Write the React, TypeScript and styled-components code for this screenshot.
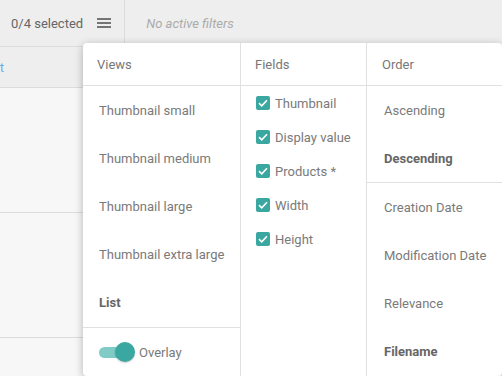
import styled, { createGlobalStyle } from 'styled-components';

const GlobalStyle = createGlobalStyle`
  html, body {
    margin: 0;
    padding: 0;
    background: #f7f7f7;
    font-family: Roboto, "Liberation Sans", Arial, sans-serif;
  }
  * {
    box-sizing: border-box;
  }
`;

const views = [
  { label: 'Thumbnail small' },
  { label: 'Thumbnail medium' },
  { label: 'Thumbnail large' },
  { label: 'Thumbnail extra large' },
  { label: 'List', active: true },
];

const fields = ['Thumbnail', 'Display value', 'Products *', 'Width', 'Height'];

const App = () => {
  return (
    <Page>
      <GlobalStyle />
      <TopBar>
        <Selected>0/4 selected</Selected>
        <MenuButton aria-label="menu">
          <svg width="14" height="10" viewBox="0 0 14 10">
            <rect x="0" y="0" width="14" height="2" fill="#757575" />
            <rect x="0" y="4" width="14" height="2" fill="#757575" />
            <rect x="0" y="8" width="14" height="2" fill="#757575" />
          </svg>
        </MenuButton>
        <Filters>No active filters</Filters>
      </TopBar>
      <SubBar>
        <ClipLink>
          <Link>Select</Link>
        </ClipLink>
      </SubBar>
      <TableRow />
      <TableRow />

      <Panel>
        <Column>
          <ColumnHead>Views</ColumnHead>
          <List>
            {views.map((v) => (
              <Item key={v.label} $active={v.active}>
                {v.label}
              </Item>
            ))}
          </List>
          <Footer>
            <Switch>
              <Track />
              <Thumb />
            </Switch>
            <SwitchLabel>Overlay</SwitchLabel>
          </Footer>
        </Column>
        <Column>
          <ColumnHead>Fields</ColumnHead>
          <List>
            {fields.map((f) => (
              <CheckRow key={f}>
                <Box>
                  <svg width="10" height="8" viewBox="0 0 10 8">
                    <path d="M1 4.2 L3.7 6.8 L9 1.2" stroke="#fff" strokeWidth="1.6" fill="none" />
                  </svg>
                </Box>
                {f}
              </CheckRow>
            ))}
          </List>
        </Column>
        <Column $inset={17}>
          <ColumnHead>Order</ColumnHead>
          <Group>
            <Item>Ascending</Item>
            <Item $active>Descending</Item>
          </Group>
          <List>
            <Item>Creation Date</Item>
            <Item>Modification Date</Item>
            <Item>Relevance</Item>
            <Item $active>Filename</Item>
          </List>
        </Column>
      </Panel>
    </Page>
  );
};

const Page = styled.div`
  position: relative;
  width: 502px;
  height: 376px;
  overflow: hidden;
  background: #f7f7f7;
`;

const TopBar = styled.div`
  display: flex;
  align-items: center;
  height: 47px;
  background: #eeeeee;
  border-bottom: 1px solid #dcdcdc;
`;

const Selected = styled.span`
  padding-left: 11px;
  font-size: 13px;
  color: #666;
`;

const MenuButton = styled.div`
  display: flex;
  align-items: center;
  height: 46px;
  padding: 0 13px 0 14px;
  border-right: 1px solid #dcdcdc;
`;

const Filters = styled.span`
  padding-left: 21px;
  font-size: 13px;
  font-style: italic;
  color: #ababab;
`;

const SubBar = styled.div`
  display: flex;
  align-items: center;
  height: 41px;
  background: #eeeeee;
  border-bottom: 1px solid #dcdcdc;
`;

const ClipLink = styled.div`
  width: 4px;
  overflow: hidden;
  display: flex;
  justify-content: flex-end;
`;

const Link = styled.span`
  font-size: 13px;
  color: #64b0f2;
  white-space: nowrap;
`;

const TableRow = styled.div`
  height: 125px;
  border-bottom: 1px solid #dcdcdc;
`;

const Panel = styled.div`
  position: absolute;
  top: 43px;
  left: 83px;
  width: 419px;
  height: 333px;
  display: grid;
  grid-template-columns: 158px 126px 1fr;
  background: #fff;
  border-radius: 4px;
  box-shadow: 0 2px 8px rgba(0, 0, 0, 0.28);
`;

const Column = styled.div<{ $inset?: number }>`
  display: flex;
  flex-direction: column;
  border-right: 1px solid #e0e0e0;
  --inset: ${({ $inset }) => ($inset ?? 16)}px;
  &:last-child {
    border-right: none;
  }
`;

const ColumnHead = styled.div`
  height: 43px;
  display: flex;
  align-items: center;
  padding-left: calc(var(--inset) - 2px);
  font-size: 13px;
  color: #777;
  border-bottom: 1px solid #e0e0e0;
`;

const List = styled.div`
  display: flex;
  flex-direction: column;
`;

const Group = styled(List)`
  border-bottom: 1px solid #e0e0e0;
`;

const Item = styled.div<{ $active?: boolean }>`
  height: 48px;
  display: flex;
  align-items: center;
  padding-left: var(--inset);
  font-size: 13px;
  white-space: nowrap;
  color: ${({ $active }) => ($active ? '#666' : '#7a7a7a')};
  font-weight: ${({ $active }) => ($active ? 700 : 400)};
`;

const Footer = styled.div`
  margin-top: auto;
  height: 49px;
  display: flex;
  align-items: center;
  padding-left: var(--inset);
  border-top: 1px solid #e0e0e0;
`;

const Switch = styled.div`
  position: relative;
  width: 36px;
  height: 20px;
  display: flex;
  align-items: center;
`;

const Track = styled.div`
  width: 32px;
  height: 11px;
  border-radius: 6px;
  background: #80cbc6;
`;

const Thumb = styled.div`
  position: absolute;
  left: 16px;
  top: 0;
  width: 20px;
  height: 20px;
  border-radius: 50%;
  background: #3aa8a0;
  box-shadow: 0 1px 2px rgba(0, 0, 0, 0.2);
`;

const SwitchLabel = styled.span`
  margin-left: 4px;
  font-size: 13px;
  color: #7a7a7a;
`;

const CheckRow = styled.div`
  height: 34px;
  display: flex;
  align-items: center;
  gap: 5px;
  padding-left: 15px;
  font-size: 13px;
  color: #7a7a7a;
  white-space: nowrap;
`;

const Box = styled.span`
  width: 14px;
  height: 14px;
  border-radius: 2px;
  background: #3aa8a0;
  display: flex;
  align-items: center;
  justify-content: center;
`;

export default App;
